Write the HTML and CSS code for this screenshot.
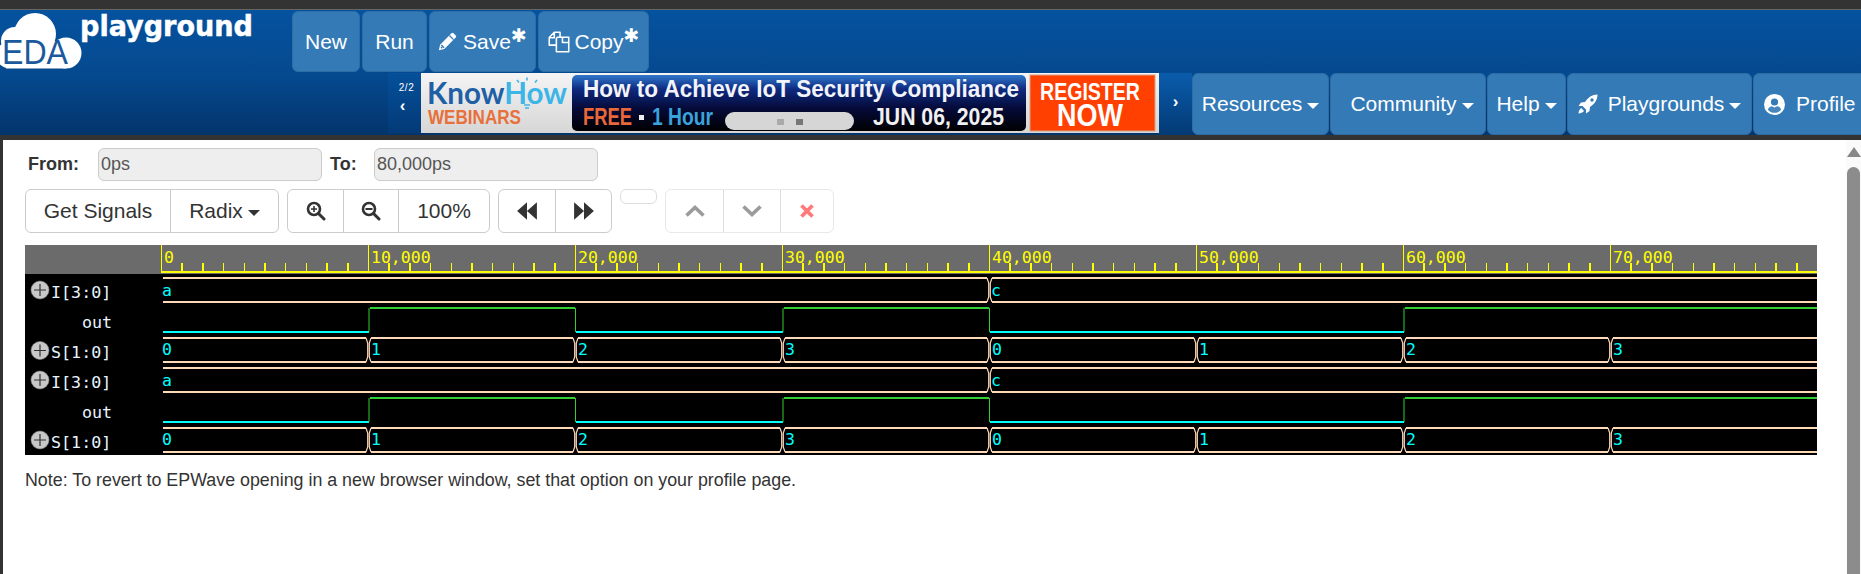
FILE: index.html
```html
<!DOCTYPE html>
<html lang="en">
<head>
<meta charset="utf-8">
<title>EPWave - EDA Playground</title>
<link rel="stylesheet" href="styles.css">
</head>
<body>
<div class="topbar"></div>
<header class="header">
  <div class="hdr-row hdr-row-top">
    <a class="logo">
      <svg class="logo-svg" viewBox="0 0 292 62">
        <g fill="#fff">
          <circle cx="35" cy="23" r="21"/>
          <circle cx="15" cy="30" r="14"/>
          <circle cx="9" cy="44" r="13"/>
          <circle cx="66" cy="42" r="15.5"/>
          <rect x="6" y="30" width="60" height="27.5"/>
        </g>
        <text class="logo-eda" x="2" y="53" textLength="66" lengthAdjust="spacingAndGlyphs">EDA</text>
        <text class="logo-play" x="80" y="25" textLength="173" lengthAdjust="spacingAndGlyphs">playground</text>
      </svg>
    </a>
    <a class="btn b-new">New</a>
    <a class="btn b-run">Run</a>
    <a class="btn b-save">
      <svg class="ico ico-pencil" viewBox="0 0 18 18"><path fill="#fff" d="M12.7 1.2a1.5 1.5 0 0 1 2.1 0l2 2a1.5 1.5 0 0 1 0 2.1L6 16.2.8 17.4 2 12Z"/><path fill="none" stroke="#337ab7" stroke-width="1.2" d="M10.8 3.3l3.9 3.9M3.2 12.3l2.6 2.6M2.8 14.2l1.2 1.2"/></svg>
      <span>Save</span><span class="star">✱</span>
    </a>
    <a class="btn b-copy">
      <svg class="ico ico-copy" viewBox="0 0 21 21"><path fill="none" stroke="#fff" stroke-width="1.5" stroke-linejoin="round" d="M8 13.5H1.2V6.2L6 1.2h5.5V6M6 1.5V6.5H1.5M11.5 6H9L8 7v12.8h11.8V6ZM13.8 6.2V11h5.6"/></svg>
      <span>Copy</span><span class="star">✱</span>
    </a>
  </div>
  <div class="hdr-row hdr-row-bottom">
    <div class="car-nav car-prev"><span class="car-count">2/2</span><span class="car-arrow">‹</span></div>
    <svg class="ad" viewBox="0 0 738 60">
      <defs>
        <linearGradient id="adbg" x1="0" y1="0" x2="0" y2="1"><stop offset="0" stop-color="#f4f4f4"/><stop offset="1" stop-color="#d6d6d6"/></linearGradient>
        <linearGradient id="adpanel" x1="0" y1="0" x2="0" y2="1"><stop offset="0" stop-color="#2f78cc"/><stop offset=".25" stop-color="#0e2a80"/><stop offset=".6" stop-color="#050a38"/><stop offset="1" stop-color="#000"/></linearGradient>
      </defs>
      <rect width="738" height="60" fill="url(#adbg)"/>
      <text class="ad-know" x="6" y="31" textLength="140" lengthAdjust="spacingAndGlyphs"><tspan fill="#1f5fa6">Know</tspan><tspan fill="#3db5e6">How</tspan></text>
      <path fill="none" stroke="#3db5e6" stroke-width="1.6" d="M106 4.5v3M96 7l2 2.500M116 7l-2 2.500M103 32h6M104 35h4"/>
      <text class="ad-web" x="7" y="51" textLength="93" lengthAdjust="spacingAndGlyphs">WEBINARS</text>
      <rect x="151" y="2" width="454" height="56" rx="5" fill="url(#adpanel)"/>
      <text class="ad-title" x="162" y="24" textLength="436" lengthAdjust="spacingAndGlyphs">How to Achieve IoT Security Compliance</text>
      <text class="ad-free" x="162" y="52" textLength="49" lengthAdjust="spacingAndGlyphs">FREE</text>
      <rect x="218" y="42" width="5" height="5" fill="#eee"/>
      <text class="ad-hour" x="231" y="52" textLength="61" lengthAdjust="spacingAndGlyphs">1 Hour</text>
      <rect x="304" y="39" width="129" height="18" rx="9" fill="#d6d6d6"/>
      <rect x="356" y="46" width="7" height="6" fill="#aaa"/>
      <rect x="375" y="46" width="7" height="6" fill="#777"/>
      <text class="ad-date" x="452" y="52" textLength="131" lengthAdjust="spacingAndGlyphs">JUN 06, 2025</text>
      <rect x="609" y="2" width="125" height="56" fill="#ff4000" stroke="#d9a088"/>
      <text class="ad-reg" x="619" y="27" textLength="100" lengthAdjust="spacingAndGlyphs">REGISTER</text>
      <text class="ad-now" x="636" y="53" textLength="66" lengthAdjust="spacingAndGlyphs">NOW</text>
    </svg>
    <div class="car-nav car-next"><span class="car-arrow">›</span></div>
    <nav class="nav">
      <a class="btn nav-res">Resources<i class="caret"></i></a>
      <a class="btn nav-com">Community<i class="caret"></i></a>
      <a class="btn nav-help">Help<i class="caret"></i></a>
      <a class="btn nav-play">
        <svg class="ico ico-rocket" viewBox="0 0 20 20"><path fill="#fff" fill-rule="evenodd" d="M19.5.5C14 .5 10 3.500 7 8L3 8.500.5 12h4L8 15.500v4l3.500-2.500.500-4C16.500 10 19.500 6 19.500.5ZM14 4.300a1.700 1.700 0 1 1 0 3.400 1.700 1.700 0 0 1 0-3.400Z"/><path fill="#fff" d="M3.200 14C1.500 15 .5 17.500.5 19.500c2 0 4.500-1 5.500-2.500Z"/></svg>
        <span>Playgrounds</span><i class="caret"></i>
      </a>
      <a class="btn nav-prof">
        <svg class="ico ico-user" viewBox="0 0 21 21"><circle cx="10.500" cy="10.500" r="10.500" fill="#fff"/><circle cx="10.500" cy="8" r="3.600" fill="#337ab7"/><path fill="#337ab7" d="M3.800 15.500c1-2.500 3-3.300 4-3.300l2.700 1.200 2.700-1.200c1 0 3 .8 4 3.300a8.500 8.500 0 0 1-13.400 0Z" opacity=".9"/></svg>
        <span>Profile</span>
      </a>
    </nav>
  </div>
</header>
<div class="divider"></div>
<main class="main">
  <div class="content">
    <div class="range">
      <label class="lbl lbl-from">From:</label>
      <div class="field">0ps</div>
      <label class="lbl lbl-to">To:</label>
      <div class="field">80,000ps</div>
    </div>
    <div class="toolbar">
      <div class="group">
        <a class="tb tb-sig">Get Signals</a>
        <a class="tb tb-radix">Radix<i class="caret caret-dark"></i></a>
      </div>
      <div class="group">
        <a class="tb tb-zoom"><svg class="tbi" viewBox="0 0 20 20"><circle cx="8" cy="8" r="6" fill="none" stroke="#333" stroke-width="2.600"/><path fill="none" stroke="#333" stroke-width="3" stroke-linecap="round" d="M13 13l5 5"/><path fill="none" stroke="#333" stroke-width="1.600" d="M5 8h6M8 5v6"/></svg></a>
        <a class="tb tb-zoom"><svg class="tbi" viewBox="0 0 20 20"><circle cx="8" cy="8" r="6" fill="none" stroke="#333" stroke-width="2.600"/><path fill="none" stroke="#333" stroke-width="3" stroke-linecap="round" d="M13 13l5 5"/><path fill="none" stroke="#333" stroke-width="2" d="M4.500 8h7"/></svg></a>
        <a class="tb tb-pct">100%</a>
      </div>
      <div class="group">
        <a class="tb tb-seek"><svg class="tbi" viewBox="0 0 20 18"><path fill="#333" d="M10 1v16L1 9ZM19 1v16L10 9Z"/></svg></a>
        <a class="tb tb-seek"><svg class="tbi" viewBox="0 0 20 18"><path fill="#333" d="M1 1v16l9-8ZM10 1v16l9-8Z"/></svg></a>
      </div>
      <div class="empty-btn"></div>
      <div class="group group-off">
        <a class="tb tb-mark"><svg class="tbi" viewBox="0 0 20 14"><path fill="none" stroke="#666" stroke-width="3.600" d="M1.500 11.500 10 3.500l8.500 8"/></svg></a>
        <a class="tb tb-mark"><svg class="tbi" viewBox="0 0 20 14"><path fill="none" stroke="#666" stroke-width="3.600" d="M1.500 2.500l8.500 8 8.500-8"/></svg></a>
        <a class="tb tb-close"><svg class="tbi tbi-x" viewBox="0 0 14 14"><path fill="none" stroke="#f33" stroke-width="3.800" d="M1.500 1.500l11 11M12.500 1.500l-11 11"/></svg></a>
      </div>
    </div>
    <svg class="wave" viewBox="25 245 1792 210" width="1792" height="210">
      <defs>
        <g id="dec"><path d="M20.700 263V271M41.400 263V271M62.100 263V271M82.800 263V271M103.500 263V271M124.200 263V271M144.900 263V271M165.600 263V271M186.300 263V271"/></g>
        <path id="cross" fill="none" stroke="#ffdab9" stroke-width="1.200" d="M-2.500 0L-.8 5V19L-2.500 24M2.500 0L.8 5V19L2.500 24"/>
        <g id="sig" fill="none" stroke-width="2">
          <path stroke="#ffdab9" d="M163 278H987M992 278H1817M163 302H987M992 302H1817"/>
          <path stroke="#ffdab9" d="M163 338H366M371 338H573M578 338H780M785 338H987M992 338H1194M1199 338H1401M1406 338H1608M1613 338H1817"/>
          <path stroke="#ffdab9" d="M163 362H366M371 362H573M578 362H780M785 362H987M992 362H1194M1199 362H1401M1406 362H1608M1613 362H1817"/>
          <use href="#cross" x="989.500" y="278"/>
          <use href="#cross" x="368.500" y="338"/><use href="#cross" x="575.500" y="338"/><use href="#cross" x="782.500" y="338"/><use href="#cross" x="989.500" y="338"/>
          <use href="#cross" x="1196.500" y="338"/><use href="#cross" x="1403.500" y="338"/><use href="#cross" x="1610.500" y="338"/>
          <path stroke="#0ff" d="M163 332H369M576 332H783M990 332H1404"/>
          <path stroke="#32cd32" d="M370 308H575M784 308H989M1405 308H1817"/>
          <path stroke="#32cd32" stroke-width="1" d="M369 332V308M575.500 308V332M783 332V308M989.500 308V332M1404 332V308"/>
        </g>
        <g id="plus">
          <circle r="9" fill="#c8c8c8" stroke="#8a8a8a" stroke-width=".6"/>
          <path stroke="#333" stroke-width="1.200" d="M-6 0H6M0-6V6"/>
        </g>
      </defs>
      <rect x="25" y="245" width="1792" height="210" fill="#000"/>
      <rect x="25" y="245" width="1792" height="29" fill="#6b6b6b"/>
      <rect x="161" y="271" width="1656" height="2" fill="#ff0"/>
      <path class="major" d="M161.500 245V272M368.500 245V272M575.500 245V272M782.500 245V272M989.500 245V272M1196.500 245V272M1403.500 245V272M1610.500 245V272"/>
      <g class="minor">
        <use href="#dec" x="161.500"/><use href="#dec" x="368.500"/><use href="#dec" x="575.500"/><use href="#dec" x="782.500"/>
        <use href="#dec" x="989.500"/><use href="#dec" x="1196.500"/><use href="#dec" x="1403.500"/><use href="#dec" x="1610.500"/>
      </g>
      <g class="rul">
        <text x="164" y="263">0</text><text x="371" y="263">10,000</text><text x="578" y="263">20,000</text><text x="785" y="263">30,000</text>
        <text x="992" y="263">40,000</text><text x="1199" y="263">50,000</text><text x="1406" y="263">60,000</text><text x="1613" y="263">70,000</text>
      </g>
      <use href="#sig"/>
      <use href="#sig" y="90"/>
      <use href="#plus" x="40" y="290"/><use href="#plus" x="40" y="350.500"/><use href="#plus" x="40" y="380"/><use href="#plus" x="40" y="440"/>
      <g class="name">
        <text x="51" y="298">I[3:0]</text><text x="82" y="328">out</text><text x="51" y="358">S[1:0]</text>
        <text x="51" y="388">I[3:0]</text><text x="82" y="418">out</text><text x="51" y="448">S[1:0]</text>
      </g>
      <g class="val">
        <text x="162" y="296">a</text><text x="991" y="296">c</text>
        <text x="162" y="355">0</text><text x="371" y="355">1</text><text x="578" y="355">2</text><text x="785" y="355">3</text>
        <text x="992" y="355">0</text><text x="1199" y="355">1</text><text x="1406" y="355">2</text><text x="1613" y="355">3</text>
        <text x="162" y="386">a</text><text x="991" y="386">c</text>
        <text x="162" y="445">0</text><text x="371" y="445">1</text><text x="578" y="445">2</text><text x="785" y="445">3</text>
        <text x="992" y="445">0</text><text x="1199" y="445">1</text><text x="1406" y="445">2</text><text x="1613" y="445">3</text>
      </g>
    </svg>
    <p class="note">Note: To revert to EPWave opening in a new browser window, set that option on your profile page.</p>
  </div>
  <div class="scrollbar"><i class="sb-arrow"></i><div class="sb-thumb"></div></div>
</main>
</body>
</html>
```

FILE: styles.css
```css
* { box-sizing: border-box; }
html, body { margin: 0; height: 100%; overflow: hidden; }
body { background: #333; font-family: "Liberation Sans", Arial, sans-serif; color: #333; display: flex; flex-direction: column; }

.topbar { height: 10px; background: #333; border-bottom: 1px solid #666; flex: none; }
.header { height: 125px; flex: none; padding-top: 1px; overflow: hidden; background: linear-gradient(#05529f, #054a90 50%, #03346c); }
.hdr-row { display: flex; white-space: nowrap; }
.hdr-row-top { height: 61px; gap: 2px; }
.hdr-row-bottom { height: 62px; margin-top: 1px; padding-left: 388px; }
.logo { width: 290px; height: 62px; flex: none; display: block; }
.logo-svg { width: 292px; height: 62px; display: block; }
.logo-eda { font: 35px "Liberation Sans", sans-serif; fill: #1a5a9c; }
.logo-play { font: bold 28px "DejaVu Sans", sans-serif; fill: #fff; stroke: #fff; stroke-width: .5px; }

.btn { display: flex; align-items: center; justify-content: center; flex: none; height: 100%; color: #fff; font-size: 21px; background: #337ab7; border: 1px solid #2e6da4; border-radius: 6px; }
.b-new { width: 68px; }
.b-run { width: 65px; }
.b-save { width: 107px; }
.b-copy { width: 111px; }
.ico { flex: none; display: block; }
.ico-pencil { width: 19px; height: 19px; margin-right: 6px; }
.ico-copy { width: 22px; height: 22px; margin-right: 5px; }
.star { font: bold 19px "DejaVu Sans", sans-serif; align-self: flex-start; margin-top: 12px; }

.car-nav { width: 33px; flex: none; height: 60px; position: relative; display: flex; flex-direction: column; align-items: center; color: #fff; }
.car-prev { background: linear-gradient(#05509a, #033a78); padding-top: 10px; }
.car-next { background: linear-gradient(#0a5cac, #033a74); justify-content: center; padding-bottom: 5px; height: 62px; }
.car-count { font-size: 10px; line-height: 10px; letter-spacing: .5px; margin-left: 4px; }
.car-arrow { font-size: 17px; line-height: 17px; font-weight: bold; }
.car-prev .car-arrow { margin: 4px 0 0 -4px; }
.ad { width: 738px; height: 60px; flex: none; display: block; }
.ad text { font-family: "Liberation Sans Narrow", "Liberation Sans", sans-serif; font-weight: 700; }
.ad .ad-know { font-family: Lato, "Liberation Sans", sans-serif; font-size: 30px; }
.ad .ad-web { font-size: 21px; fill: #e8703a; }
.ad .ad-title { font-size: 23px; fill: #f2f4fa; }
.ad .ad-free { font-size: 23px; fill: #e8683a; }
.ad .ad-hour { font-size: 23px; fill: #3aa3dc; }
.ad .ad-date { font-size: 23px; fill: #f0f0f0; }
.ad .ad-reg { font-size: 24px; fill: #fff; }
.ad .ad-now { font-size: 31px; fill: #fff; }

.nav { display: flex; gap: 1px; height: 62px; }
.nav-res { width: 137px; }
.nav-com { width: 156px; padding-left: 8px; }
.nav-help { width: 79px; }
.nav-play { width: 185px; }
.nav-prof { width: 130px; justify-content: flex-start; padding-left: 10px; }
.ico-rocket { width: 20px; height: 20px; margin-right: 10px; }
.ico-user { width: 21px; height: 21px; margin-right: 11px; }
.caret { display: inline-block; width: 0; height: 0; margin-left: 5px; margin-top: 3px; border: 6px solid transparent; border-top-color: #fff; border-bottom: 0; }
.caret-dark { border-top-color: #333; }

.divider { height: 5px; background: #333; flex: none; }
.main { flex: 1; display: flex; min-height: 0; padding-left: 3px; }
.content { flex: 1; min-width: 0; background: #fff; padding: 8px 0 0 22px; }
.range { display: flex; align-items: center; height: 33px; }
.lbl { font-weight: bold; font-size: 18px; }
.lbl-from { width: 73px; padding-left: 3px; }
.lbl-to { width: 44px; margin-left: 8px; }
.field { width: 224px; height: 33px; background: #eee; border: 1px solid #ccc; border-radius: 6px; color: #555; font-size: 18px; line-height: 31px; padding-left: 2px; }

.toolbar { display: flex; align-items: flex-start; gap: 8px; margin-top: 8px; height: 44px; }
.group { display: flex; height: 44px; border: 1px solid #ccc; border-radius: 6px; }
.group-off { opacity: .65; border-color: #ddd; }
.tb { display: flex; align-items: center; justify-content: center; height: 100%; font-size: 21px; color: #333; border-left: 1px solid #ccc; }
.tb:first-child { border-left: 0; }
.tb-sig { width: 144px; }
.tb-radix { width: 108px; }
.tb-zoom { width: 55px; }
.tb-pct { width: 91px; }
.tb-seek { width: 56px; }
.tb-mark { width: 57px; }
.tb-close { width: 53px; }
.tbi { width: 22px; height: 20px; display: block; }
.tb-mark .tbi { height: 14px; }
.tb-close .tbi-x { width: 14px; height: 14px; }
.empty-btn { width: 37px; height: 15px; border: 1px solid #ddd; border-radius: 6px; }

.wave { display: block; margin-top: 12px; }
.major { stroke: #ff0; stroke-width: 1; fill: none; }
.minor { stroke: #ff0; stroke-width: 1.500; shape-rendering: crispEdges; }
.rul text { font: 16.500px "DejaVu Sans Mono", monospace; fill: #ff0; }
.name text { font: 16.700px "DejaVu Sans Mono", monospace; fill: #e6f4ff; }
.val text { font: 16.500px "DejaVu Sans Mono", monospace; fill: #0ff; }

.note { margin: 16px 0 0; font-size: 17.840px; line-height: 18px; color: #333; }

.scrollbar { width: 15px; flex: none; background: #fafafa; display: flex; flex-direction: column; align-items: center; padding-top: 7px; }
.sb-arrow { width: 0; height: 0; border: 7px solid transparent; border-bottom: 10px solid #888; border-top: 0; }
.sb-thumb { width: 13px; flex: 1; margin-top: 10px; background: #8c8c8c; border-radius: 7px 7px 0 0; }
```
